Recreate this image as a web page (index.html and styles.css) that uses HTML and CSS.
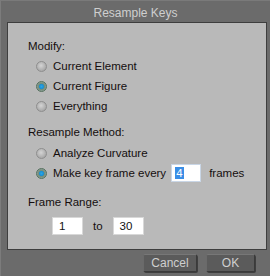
FILE: index.html
```html
<!DOCTYPE html>
<html lang="en">
<head>
    <meta charset="utf-8">
    <title>Resample Keys</title>
    <link rel="stylesheet" href="styles.css">
</head>
<body>
    <div class="window">
        <div class="titlebar">Resample Keys</div>

        <div class="panel">
            <!-- Modify -->
            <div class="group group-modify">
                <div class="heading">Modify:</div>
                <div class="option"><span class="radio"></span>Current Element</div>
                <div class="option"><span class="radio on"></span>Current Figure</div>
                <div class="option"><span class="radio"></span>Everything</div>
            </div>

            <!-- Resample method -->
            <div class="group group-method">
                <div class="heading">Resample Method:</div>
                <div class="option"><span class="radio"></span>Analyze Curvature</div>
                <div class="option"><span class="radio on"></span>Make key frame every
                    <span class="field field-every"><span class="sel">4</span></span>
                    <span class="after">frames</span>
                </div>
            </div>

            <!-- Frame range -->
            <div class="group group-range">
                <div class="heading">Frame Range:</div>
                <div class="range">
                    <span class="field">1</span>
                    <span class="to">to</span>
                    <span class="field">30</span>
                </div>
            </div>
        </div>

        <div class="buttons">
            <span class="btn btn-cancel">Cancel</span>
            <span class="btn btn-ok">OK</span>
        </div>
    </div>
</body>
</html>
```

FILE: styles.css
```css
/* Dialog Resample Keys */
body {
    margin: 0;
    background: #6b6b6b;
    font-family: "Liberation Sans", Arial, sans-serif;
    font-size: 11.5px;
}

.window {
    width: 270px;
    height: 276px;
    box-sizing: border-box;
    background: #6b6b6b;
    border-left: 1px solid #7c7c7c;
    border-top: 1px solid #7a7a7a;
    display: flex;
    flex-direction: column;
}

.titlebar {
    height: 21px;
    line-height: 24px;
    text-align: center;
    color: #cfcfcf;
    font-size: 12px;
}

.panel {
    height: 228px;
    box-sizing: border-box;
    margin: 0 3px 0 6px;
    background: #b9b9b9;
    border: 1px solid #3e3e3e;
    padding: 13px 0 0 20px;
    color: #140e0e;
}

.heading,
.option,
.range {
    height: 20px;
    line-height: 20px;
    display: flex;
    align-items: center;
}

.option {
    padding-left: 8px;
}

.group-method {
    margin-top: 6px;
}

.group-method .heading {
    margin-bottom: 1px;
}

.group-range {
    margin-top: 9px;
}

.group-range .heading {
    margin-bottom: 4px;
}

.radio {
    width: 9px;
    height: 9px;
    border-radius: 50%;
    border: 1px solid #8e8e8e;
    background: radial-gradient(circle at 45% 40%, #d4d4d4 0%, #b0b0b0 60%, #9c9c9c 100%);
    margin-right: 6px;
}

.radio.on {
    border-color: #55705e;
    background: radial-gradient(circle, #2aa6e6 0%, #1d8fd0 35%, #6f8c7c 45%, #a9b3ad 100%);
}

.field {
    display: inline-block;
    box-sizing: border-box;
    width: 31px;
    height: 18px;
    line-height: 16px;
    background: #ffffff;
    border: 1px solid #d8d8d8;
    padding-left: 6px;
    color: #111111;
}

.field-every {
    margin-left: 5px;
    width: 30px;
    border-color: #c9d6e6;
    padding-left: 3px;
}

.sel {
    background: #3a8ee6;
    color: #ffffff;
    padding: 0 1px;
}

.after {
    margin-left: 8px;
}

.range {
    padding-left: 24px;
}

.to {
    margin: 0 10px 0 10px;
}

.buttons {
    display: flex;
    justify-content: flex-end;
    gap: 9px;
    padding: 4px 15px 0 0;
}

.btn {
    box-sizing: border-box;
    height: 18px;
    line-height: 16px;
    text-align: center;
    color: #cfcfcf;
    background: #5b5b5b;
    border: 1px solid #3a3a3a;
    border-top-color: #777777;
    border-left-color: #6a6a6a;
    border-radius: 2px;
    box-shadow: 1px 1px 0 #3f3f3f;
    font-size: 12px;
}

.btn-cancel {
    width: 54px;
}

.btn-ok {
    width: 49px;
}
```
